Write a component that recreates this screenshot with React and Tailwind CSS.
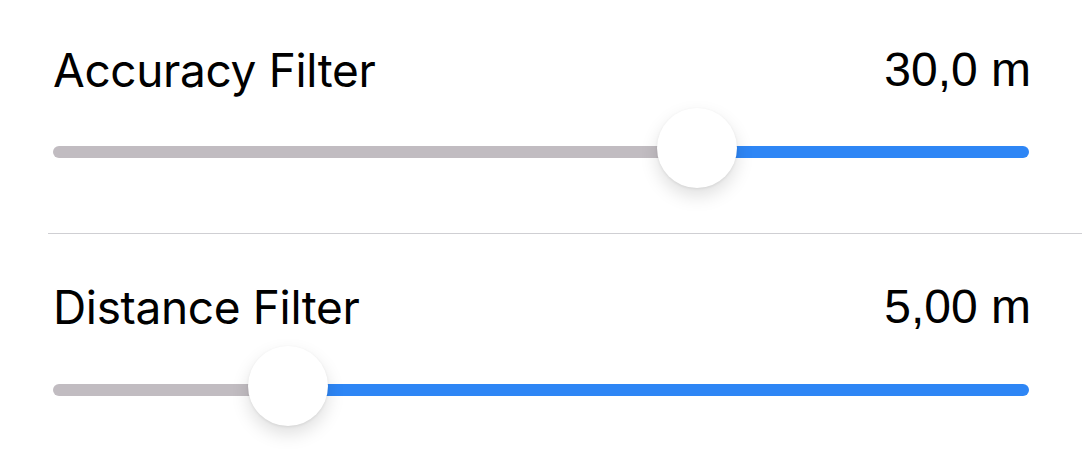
import React from 'react';

const filters = [
  { label: 'Accuracy Filter', value: '30,0 m', pos: 0.66, pad: 'pt-[40px] pb-[29px]', slider: 'h-[104px]' },
  { label: 'Distance Filter', value: '5,00 m', pos: 0.241, pad: 'pt-[43px]', slider: 'h-[106px]' },
];

const Slider = ({ pos, className }) => (
  <div className={`relative ${className}`}>
    <div className="absolute left-0 right-0 top-1/2 -translate-y-1/2 h-[12px] flex">
      <div className="h-full bg-[#c1bcc1] rounded-l-full" style={{ width: `${pos * 100}%` }} />
      <div className="h-full flex-1 bg-[#2e86f5] rounded-r-full" />
    </div>
    <div
      className="absolute top-1/2 w-[80px] h-[80px] -ml-[40px] -mt-[44px] rounded-full bg-white shadow-[0_8px_18px_rgba(0,0,0,0.13),0_1px_3px_rgba(0,0,0,0.08)]"
      style={{ left: `${pos * 100}%` }}
    />
  </div>
);

export default function App() {
  return (
    <div className="w-[1082px] h-[455px] overflow-hidden bg-white">
      <div className="bg-white" style={{ fontFamily: 'Inter, "Liberation Sans", sans-serif' }}>
        {filters.map((f, i) => (
          <div key={f.label}>
            {i > 0 && <div className="ml-[48px] h-px bg-[#cfcfd3]" />}
            <div className={`px-[53px] ${f.pad}`}>
              <div className="flex items-center justify-between h-[60px] leading-[60px] text-black">
                <span className="text-[46px] tracking-[-0.35px]">{f.label}</span>
                <span className="text-[48px] -mr-[2px]" style={{ fontFamily: '"Liberation Sans", Arial, sans-serif' }}>{f.value}</span>
              </div>
              <Slider pos={f.pos} className={f.slider} />
            </div>
          </div>
        ))}
      </div>
    </div>
  );
}
